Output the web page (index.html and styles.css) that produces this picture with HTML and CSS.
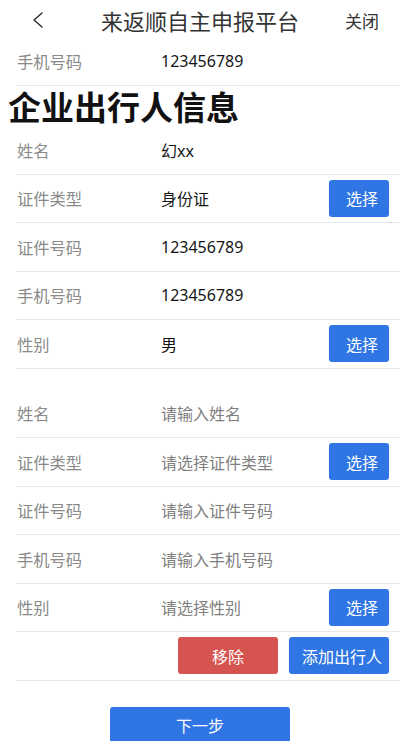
FILE: index.html
```html
<!DOCTYPE html>
<html lang="zh-CN">
<head>
<meta charset="utf-8">
<title>来返顺自主申报平台</title>
<link rel="stylesheet" href="styles.css">
</head>
<body>
<div class="page">
  <header class="topbar">
    <span class="back">
      <svg width="12" height="16" viewBox="0 0 12 16"><path d="M10 1 L2 8 L10 15" fill="none" stroke="#333" stroke-width="1.6" stroke-linecap="round" stroke-linejoin="round"/></svg>
    </span>
    <span class="title">来返顺自主申报平台</span>
    <span class="close">关闭</span>
  </header>

  <div class="row"><span class="label">手机号码</span><span class="value">123456789</span></div>

  <h1 class="section-title">企业出行人信息</h1>

  <div class="group">
    <div class="row"><span class="label">姓名</span><span class="value">幻xx</span></div>
    <div class="row"><span class="label">证件类型</span><span class="value">身份证</span><button class="btn btn-blue btn-select">选择</button></div>
    <div class="row"><span class="label">证件号码</span><span class="value">123456789</span></div>
    <div class="row"><span class="label">手机号码</span><span class="value">123456789</span></div>
    <div class="row"><span class="label">性别</span><span class="value">男</span><button class="btn btn-blue btn-select">选择</button></div>
  </div>

  <div class="group group-second">
    <div class="row"><span class="label">姓名</span><span class="value placeholder">请输入姓名</span></div>
    <div class="row"><span class="label">证件类型</span><span class="value placeholder">请选择证件类型</span><button class="btn btn-blue btn-select">选择</button></div>
    <div class="row"><span class="label">证件号码</span><span class="value placeholder">请输入证件号码</span></div>
    <div class="row"><span class="label">手机号码</span><span class="value placeholder">请输入手机号码</span></div>
    <div class="row"><span class="label">性别</span><span class="value placeholder">请选择性别</span><button class="btn btn-blue btn-select">选择</button></div>
    <div class="row row-actions">
      <button class="btn btn-red btn-wide">移除</button>
      <button class="btn btn-blue btn-wide">添加出行人</button>
    </div>
  </div>

  <div class="next-wrap"><button class="btn btn-blue btn-next">下一步</button></div>
</div>
</body>
</html>
```

FILE: styles.css
```css
* { box-sizing: border-box; }
html, body { margin: 0; padding: 0; background: #fff; }
body {
  font-family: "Noto Sans CJK SC", "Noto Sans", sans-serif;
  color: #1c1c1c;
  overflow: hidden;
}
.page { width: 400px; }

.topbar {
  height: 37px;
  display: grid;
  grid-template-columns: 1fr auto 1fr;
  align-items: center;
  padding-top: 3px;
}
.back { padding-left: 32px; display: flex; align-items: center; }
.title { font-size: 22px; color: #333; letter-spacing: 0; line-height: 1; }
.close { justify-self: end; padding-right: 21px; font-size: 17px; color: #333; line-height: 1; }

.row {
  display: flex;
  align-items: center;
  height: 48.5px;
  margin-left: 16px;
  padding-left: 1px;
  border-bottom: 1px solid #e8e8e8;
}
.label { width: 144px; font-size: 16.3px; color: #8a8a8a; flex-shrink: 0; }
.value {
  font-family: "Noto Sans", "Noto Sans CJK SC", sans-serif;
  font-size: 16px;
  color: #151515;
}
.value.placeholder { color: #808080; }

.section-title {
  margin: 0;
  padding-left: 8px;
  height: 40.5px;
  line-height: 40px;
  font-size: 33px;
  font-weight: 700;
  color: #111;
}

.group-second { margin-top: 21px; }

.btn {
  border: none;
  border-radius: 3px;
  color: #fff;
  font-family: "Noto Sans CJK SC", "Noto Sans", sans-serif;
  font-size: 16px;
  height: 37px;
  padding: 0;
  cursor: pointer;
}
.btn-blue { background: #2f76e4; }
.btn-red { background: #d6544f; }
.btn-select { width: 60px; margin-left: auto; margin-right: 11px; padding-left: 6px; }

.row-actions { justify-content: flex-end; gap: 11px; padding-right: 11px; }
.btn-wide { width: 100px; }
.btn-wide + .btn-wide { padding-left: 6px; }

.next-wrap { padding-top: 26px; padding-left: 110px; }
.btn-next { width: 180px; height: 36px; }
```
